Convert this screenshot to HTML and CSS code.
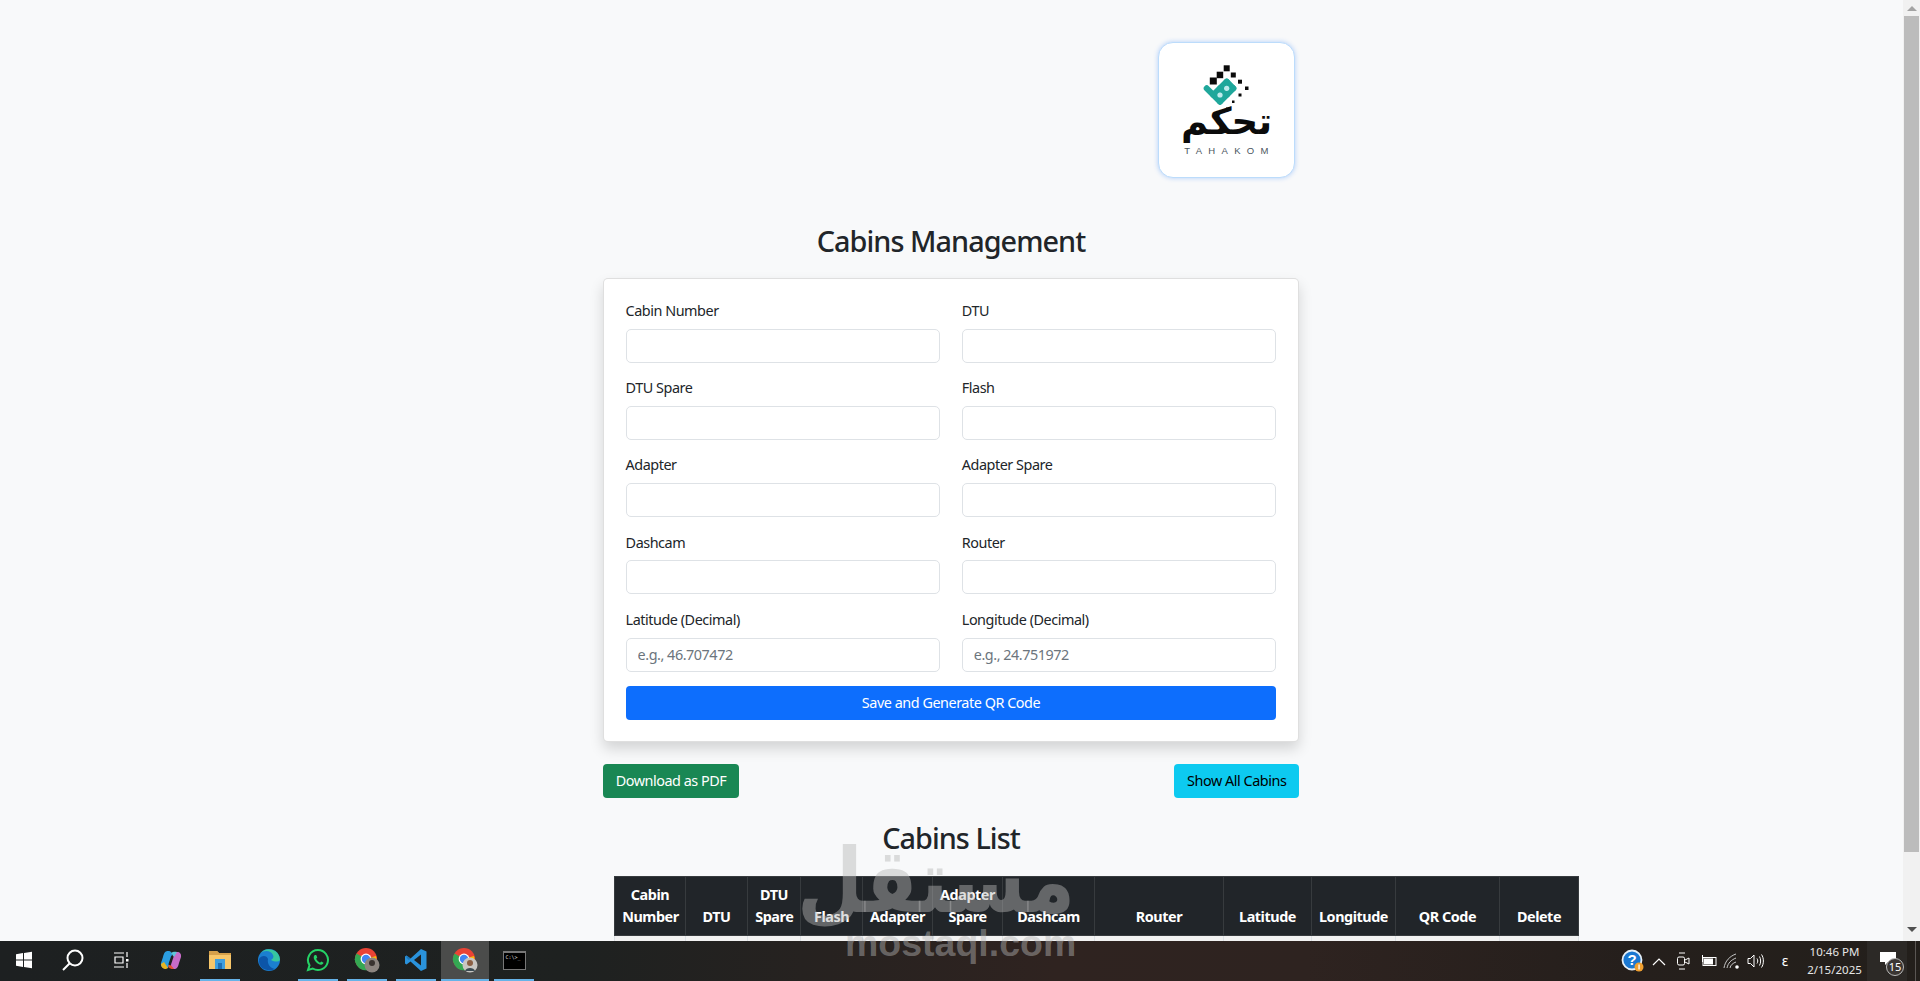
FILE: index.html

```html
<!DOCTYPE html>
<html lang="en">
<head>
  <meta charset="utf-8">
  <meta name="viewport" content="width=device-width, initial-scale=1">
  <title>Cabins Management</title>
  <link rel="stylesheet" href="styles.css">
</head>
<body>
<div class="window">
  <div class="page">
    <div class="container">
      <div class="logo-row">
        <div class="logo-card">
          <svg class="logo-mark" width="135" height="66" viewBox="0 0 135 66">
            <g fill="#0b0b0b">
              <rect x="64.700" y="22.300" width="6" height="6"/>
              <rect x="57.700" y="28.700" width="6.500" height="6.500"/>
              <rect x="71.800" y="29.500" width="5" height="5"/>
              <rect x="50.800" y="34.500" width="7" height="7"/>
              <rect x="79" y="36.700" width="4" height="4"/>
              <rect x="86" y="43.500" width="3.500" height="3.500"/>
              <rect x="79.500" y="50.500" width="3" height="3"/>
              <rect x="73" y="57.500" width="2.500" height="2.500"/>
              <rect x="67" y="64.500" width="1.500" height="1.500"/>
            </g>
            <g fill="none" stroke="#1fa79b" stroke-width="6" stroke-linecap="round" stroke-linejoin="round">
              <path d="M47.700 45.300 61 58.700"/>
              <path d="M67.700 38.700 74.300 45.300"/>
              <path d="M61 45.300 67.700 52"/>
              <path d="M61 58.700 74.300 45.300"/>
              <path d="M54.300 52 67.700 38.700"/>
            </g>
            <circle cx="61" cy="52" r="2.600" fill="#bfeaec"/>
            <circle cx="67.700" cy="45.300" r="2.600" fill="#bfeaec"/>
          </svg>
          <div class="logo-ar" dir="rtl">تحكم</div>
          <div class="logo-en">TAHAKOM</div>
        </div>
      </div>

      <h2 class="title">Cabins Management</h2>

      <form class="card">
        <div class="fields">
          <div class="field"><label>Cabin Number</label><input type="text"></div>
          <div class="field"><label>DTU</label><input type="text"></div>
          <div class="field"><label>DTU Spare</label><input type="text"></div>
          <div class="field"><label>Flash</label><input type="text"></div>
          <div class="field"><label>Adapter</label><input type="text"></div>
          <div class="field"><label>Adapter Spare</label><input type="text"></div>
          <div class="field"><label>Dashcam</label><input type="text"></div>
          <div class="field"><label>Router</label><input type="text"></div>
          <div class="field"><label>Latitude (Decimal)</label><input type="text" placeholder="e.g., 46.707472"></div>
          <div class="field"><label>Longitude (Decimal)</label><input type="text" placeholder="e.g., 24.751972"></div>
        </div>
        <button type="button" class="btn btn-blue btn-full">Save and Generate QR Code</button>
      </form>

      <div class="actions">
        <button type="button" class="btn btn-green">Download as PDF</button>
        <button type="button" class="btn btn-cyan">Show All Cabins</button>
      </div>

      <h2 class="title list-title">Cabins List</h2>

      <table class="cabins">
        <thead>
          <tr>
            <th>Cabin Number</th><th>DTU</th><th>DTU Spare</th><th>Flash</th><th>Adapter</th><th>Adapter Spare</th>
            <th>Dashcam</th><th>Router</th><th>Latitude</th><th>Longitude</th><th>QR Code</th><th>Delete</th>
          </tr>
        </thead>
        <tbody>
          <tr>
            <td>&nbsp;</td><td></td><td></td><td></td><td></td><td></td>
            <td></td><td></td><td></td><td></td><td></td><td></td>
          </tr>
        </tbody>
      </table>
    </div>
  </div>

  <div class="scrollbar">
    <div class="arrow-up"></div>
    <div class="thumb"></div>
    <div class="arrow-down"></div>
  </div>
</div>

<div class="taskbar">
  <div class="apps">
    <div class="app">
      <svg width="18" height="18" viewBox="0 0 18 18" fill="#fff"><path d="M1 3.200 8 2.100V8.500H1zM9 2 17 .8V8.500H9zM1 9.500H8V15.900L1 14.800zM9 9.500H17V17.200L9 16z"/></svg>
    </div>
    <div class="app">
      <svg width="24" height="24" viewBox="0 0 24 24" fill="none" stroke="#fff" stroke-width="2"><circle cx="14" cy="10" r="7.500"/><path d="M8.500 15.500 2 22"/></svg>
    </div>
    <div class="app">
      <svg width="18" height="18" viewBox="0 0 18 18" fill="none" stroke="#fff" stroke-width="1.200"><path d="M1 2H11M1 16H11M2 6H10V12H2zM14 1V6M14 12V17"/><rect x="13" y="8" width="2.500" height="2.500" fill="#fff" stroke="none"/></svg>
    </div>
    <div class="app">
      <svg width="24" height="24" viewBox="0 0 24 24"><path d="M9 3C6 3 5 5 4 9L2 15C1.500 18 3 20 6 20H9L13 8C13.500 5 12 3 9 3Z" fill="#2b9de0"/><path d="M5 14 9 20 7 21C4 21 2 19 2 16Z" fill="#e6b422"/><path d="M15 21C18 21 19 19 20 15L22 9C22.500 6 21 4 18 4H15L11 16C10.500 19 12 21 15 21Z" fill="#c86cc8"/><path d="M11 16 15 21C12 21.500 9.500 20 9 18Z" fill="#e5512f"/><path d="M12 5C14 3.500 16 3.500 18 4L15 9Z" fill="#5fc6d8"/><path d="M13.500 8 10.500 17" fill="none" stroke="#1e2120" stroke-width="2.500"/></svg>
    </div>
    <div class="app app-on">
      <svg width="22" height="20" viewBox="0 0 22 20"><path d="M0 1H8L10 3H22V19H0Z" fill="#f8c76a"/><path d="M0 1H8L10 3H22V5H0Z" fill="#d6a04a"/><path d="M6 9H16V19H6Z" fill="#3f9fe0"/><path d="M9 13H13V19H9Z" fill="#1f6fb5"/></svg>
    </div>
    <div class="app">
      <svg width="24" height="24" viewBox="0 0 24 24"><circle cx="12" cy="12" r="11" fill="#1b7fd0"/><path d="M23 12A11 11 0 0 0 3 6C6 2 14 2 16 7 17 9 16 11 14 12 18 14 21 14 23 12Z" fill="#37c6a0"/><path d="M2 11C4 7 10 7 11 11 10 16 13 20 18 21 12 24 1 22 2 11Z" fill="#0c55a8"/></svg>
    </div>
    <div class="app app-on">
      <svg width="24" height="24" viewBox="0 0 24 24"><path d="M12 2A10 10 0 1 1 6.700 20.500L2 22 3.500 17.300A10 10 0 0 1 12 2Z" fill="none" stroke="#25d366" stroke-width="2"/><path d="M8.800 7C7.500 8 7.300 9.800 8.500 12 9.800 14.500 12.500 16.500 14.800 16.800 16.300 17 17.300 15.800 17.500 14.800L15.200 13.500 14 14.700C12.500 14 10.800 12.300 10.200 10.800L11.300 9.600 10.200 7Z" fill="#25d366"/></svg>
    </div>
    <div class="app app-on">
      <svg width="26" height="26" viewBox="0 0 26 26"><circle cx="12" cy="12" r="11" fill="#ea4335"/><path d="M12 12 22 9A11 11 0 0 1 14 23Z" fill="#fbbc04"/><path d="M12 12 14 23A11 11 0 0 1 2.500 6.500Z" fill="#34a853"/><circle cx="12" cy="12" r="5.400" fill="#fff"/><circle cx="12" cy="12" r="4.200" fill="#4285f4"/><circle cx="18" cy="18" r="7.500" fill="#8d8580"/><circle cx="18" cy="16" r="3" fill="#3a3330"/></svg>
    </div>
    <div class="app app-on">
      <svg width="24" height="24" viewBox="0 0 24 24"><path d="M17 1 22.500 3.500V20.500L17 23 6.500 13.500 2.500 16.500 1 15.500V8.500L2.500 7.500 6.500 10.500Z" fill="#2a93dc"/><path d="M17 6.500 10 12 17 17.500Z" fill="#1e1f20"/><path d="M2.500 7.500 6.500 10.500 4.800 12 2.500 9.800Z" fill="#1c76b8"/></svg>
    </div>
    <div class="app app-on app-active">
      <svg width="26" height="26" viewBox="0 0 26 26"><circle cx="12" cy="12" r="11" fill="#ea4335"/><path d="M12 12 22 9A11 11 0 0 1 14 23Z" fill="#fbbc04"/><path d="M12 12 14 23A11 11 0 0 1 2.500 6.500Z" fill="#34a853"/><circle cx="12" cy="12" r="5.400" fill="#fff"/><circle cx="12" cy="12" r="4.200" fill="#4285f4"/><circle cx="18" cy="18" r="7.500" fill="#c8c6c2"/><circle cx="18" cy="16" r="3" fill="#8b5f44"/><path d="M13 24C14 20 22 20 23 24Z" fill="#3b4a52"/></svg>
    </div>
    <div class="app app-on">
      <div class="term">C:\&gt;_</div>
    </div>
  </div>

  <div class="tray">
    <div class="tray-item w-help">
      <svg width="24" height="24" viewBox="0 0 24 24"><circle cx="11" cy="11" r="9.500" fill="#1a78d2" stroke="#e6f0f8" stroke-width="1.800"/><text x="11" y="16" text-anchor="middle" class="help-mark">?</text><circle cx="18" cy="18" r="4.500" fill="#f0a030"/><rect x="17.400" y="15.500" width="1.300" height="5" fill="#fff"/></svg>
    </div>
    <div class="tray-item w-chev">
      <svg width="14" height="9" viewBox="0 0 14 9" fill="none" stroke="#fff" stroke-width="1.200"><path d="M1 8 7 2 13 8"/></svg>
    </div>
    <div class="tray-item w-meet">
      <svg width="14" height="18" viewBox="0 0 14 18" fill="none" stroke="#fff" stroke-width="1"><path d="M3 1H9M3 17H9"/><rect x="1.500" y="5" width="7" height="8" rx="1.500"/><path d="M9 8 13 6V12L9 10"/></svg>
    </div>
    <div class="tray-item w-batt">
      <svg width="18" height="12" viewBox="0 0 18 12"><path d="M0 2H3M0 5H3M3 0H4V7H3Z" fill="#fff"/><rect x="4" y="2.500" width="13" height="8" fill="none" stroke="#fff"/><rect x="5" y="3.500" width="9" height="6" fill="#fff"/></svg>
    </div>
    <div class="tray-item w-wifi">
      <svg width="18" height="16" viewBox="0 0 18 16" fill="none" stroke="#c8c8c8" stroke-width="1"><path d="M1 15C2 8 7 3 13 1M4 15C5 10 8 7 13 5M7 15C7.500 12 10 10 13 9"/><circle cx="14" cy="14" r="1.800" fill="#fff" stroke="none"/></svg>
    </div>
    <div class="tray-item w-sound">
      <svg width="18" height="16" viewBox="0 0 18 16" fill="none" stroke="#fff" stroke-width="1"><path d="M1 5.500H3.500L7 2V14L3.500 10.500H1Z"/><path d="M10 5.500C11 7 11 9 10 10.500M12.500 3.500C14 6 14 10 12.500 12.500M14.500 1.500C17 5 17 11 14.500 14.500"/></svg>
    </div>
    <div class="tray-item w-lang">ε</div>
    <div class="clock">
      <span>10:46 PM</span>
      <span>2/15/2025</span>
    </div>
    <div class="notify">
      <svg width="16" height="13" viewBox="0 0 16 13" fill="#fff"><path d="M0 0H16V10H8L5 13V10H0Z"/></svg>
      <span class="notify-count">15</span>
    </div>
    <div class="show-desktop"></div>
  </div>
</div>

<div class="watermark">
  <div class="wm-ar" dir="rtl">مستقل</div>
  <div class="wm-en">mostaql.com</div>
</div>
</body>
</html>
```

FILE: styles.css

```css
* {
  box-sizing: border-box;
}
html, body {
  height: 100%;
}
body {
  margin: 0;
  overflow: hidden;
  display: flex;
  flex-direction: column;
  font-family: "Noto Sans", "Open Sans", sans-serif;
  font-size: 14.4px;
  line-height: 21.6px;
  letter-spacing: -0.032em;
  color: #212529;
  background: #f8f9fa;
}

/* browser area */
.window {
  display: flex;
  height: 941px;
  overflow: hidden;
}
.page {
  flex: 1;
  min-width: 0;
  padding-right: 1px;
  overflow: hidden;
}
.container {
  width: 696px;
  margin: 0 auto;
  padding-top: 42px;
}
.logo-row {
  display: flex;
  justify-content: flex-end;
  padding-right: 4px;
}
.logo-card {
  width: 137px;
  height: 136px;
  background: #fff;
  border: 1px solid #bcdcfb;
  border-radius: 15px;
  box-shadow: 0 0 5px rgba(13, 110, 253, 0.3);
  display: flex;
  flex-direction: column;
  align-items: center;
  overflow: hidden;
}
.logo-mark {
  display: block;
  flex: none;
  overflow: visible;
}
.logo-ar {
  font-family: "DejaVu Sans", sans-serif;
  font-weight: 700;
  font-size: 37px;
  line-height: 26px;
  letter-spacing: 0;
  color: #0b0b0b;
}
.logo-en {
  font-family: "Liberation Sans", sans-serif;
  font-size: 9.500px;
  line-height: 12px;
  letter-spacing: 6.300px;
  margin: 10px -6px 0 0;
  color: #4a5560;
}

.title {
  margin: 45.500px 0 19.500px;
  font-size: 28.8px;
  line-height: 34.500px;
  font-weight: 500;
  letter-spacing: -0.033em;
  text-align: center;
}
.card {
  background: #fff;
  border: 1px solid rgba(0, 0, 0, 0.125);
  border-radius: 5px;
  padding: 21.600px 21.600px 20.600px;
  box-shadow: 0 7px 14px rgba(0, 0, 0, 0.15);
}
.fields {
  display: grid;
  grid-template-columns: 1fr 1fr;
  column-gap: 21.600px;
}
.field {
  margin-bottom: 14.400px;
}
.field label {
  display: block;
  margin-bottom: 7.200px;
}
.field input {
  display: block;
  width: 100%;
  height: 34px;
  padding: 5px 11px;
  font: inherit;
  letter-spacing: inherit;
  color: #212529;
  background: #fff;
  border: 1px solid #dee2e6;
  border-radius: 5px;
}
.field input::placeholder {
  color: #6c757d;
}
.btn {
  height: 34px;
  padding: 0 11.700px;
  font: inherit;
  letter-spacing: inherit;
  border: 1px solid transparent;
  border-radius: 4px;
}
.btn-full {
  display: block;
  width: 100%;
}
.btn-blue {
  color: #fff;
  background: #0d6efd;
}
.btn-green {
  color: #fff;
  background: #198754;
}
.btn-cyan {
  color: #000;
  background: #0dcaf0;
}
.actions {
  display: flex;
  justify-content: space-between;
  margin-top: 22px;
}
.list-title {
  margin: 23px 0 21px;
}

/* table runs wider than the form */
.cabins {
  width: 964px;
  margin-left: 11px;
  table-layout: fixed;
  border-collapse: collapse;
}
.cabins th {
  padding: 7.200px;
  font-weight: 700;
  text-align: center;
  vertical-align: bottom;
  color: #fff;
  background: #212529;
  border: 1px solid #373b3e;
}
.cabins td {
  padding: 7.200px;
  background: #f2f2f2;
  border: 1px solid #dee2e6;
}
.cabins th:nth-child(1) { width: 71px; }
.cabins th:nth-child(2) { width: 62px; }
.cabins th:nth-child(3) { width: 53px; }
.cabins th:nth-child(4) { width: 62px; }
.cabins th:nth-child(5) { width: 70px; }
.cabins th:nth-child(6) { width: 70px; }
.cabins th:nth-child(7) { width: 92px; }
.cabins th:nth-child(8) { width: 129px; }
.cabins th:nth-child(9) { width: 88px; }
.cabins th:nth-child(10) { width: 84px; }
.cabins th:nth-child(11) { width: 104px; }
.cabins th:nth-child(12) { width: 79px; }
.cabins th:nth-child(n+5) {
  padding-left: 2px;
  padding-right: 2px;
}

/* scrollbar */
.scrollbar {
  width: 17px;
  flex: none;
  display: flex;
  flex-direction: column;
  align-items: center;
  background: #f1f1f1;
}
.arrow-up {
  flex: none;
  margin: 6px 0 5px;
  border-left: 5px solid transparent;
  border-right: 5px solid transparent;
  border-bottom: 5px solid #a3a3a3;
}
.thumb {
  width: 15px;
  height: 836px;
  flex: none;
  background: #bcbcbc;
}
.arrow-down {
  flex: none;
  margin-top: 75px;
  border-left: 5px solid transparent;
  border-right: 5px solid transparent;
  border-top: 5px solid #505050;
}

/* windows taskbar */
.taskbar {
  height: 40px;
  flex: none;
  display: flex;
  justify-content: space-between;
  letter-spacing: 0;
  color: #fff;
  background: linear-gradient(to right, #1d2021 0, #1e2120 30%, #2f2320 55%, #2e2320 68%, #251f1c 85%, #231f1b 100%);
}
.apps {
  display: flex;
  gap: 9px;
  padding-left: 4px;
}
.app {
  width: 40px;
  height: 40px;
  display: flex;
  align-items: center;
  justify-content: center;
  border-bottom: 2px solid transparent;
}
.app-on {
  border-bottom-color: #66b3e8;
}
.app-active {
  width: 48px;
  margin: 0 -4px;
  background-color: #4b4c4b;
}
.term {
  width: 23px;
  height: 19px;
  padding-left: 2px;
  font-family: "DejaVu Sans Mono", monospace;
  font-size: 5px;
  line-height: 9px;
  color: #ddd;
  background: #000;
  border: 1px solid #777;
  border-top-width: 2px;
}
.tray {
  display: flex;
  align-items: stretch;
}
.tray-item {
  display: flex;
  align-items: center;
  justify-content: center;
}
.w-help { width: 27px; }
.w-chev { width: 25px; }
.w-meet { width: 24px; }
.w-batt { width: 25px; }
.w-wifi { width: 24px; }
.w-sound { width: 24px; }
.w-lang {
  width: 34px;
  font-family: "Noto Sans", sans-serif;
  font-size: 14px;
}
.help-mark {
  font-family: "Liberation Sans", sans-serif;
  font-size: 15px;
  font-weight: 700;
  fill: #fff;
}
.clock {
  width: 65px;
  display: flex;
  flex-direction: column;
  align-items: center;
  justify-content: center;
  font-size: 11.500px;
  line-height: 18px;
  color: #e6e6e6;
}
.notify {
  position: relative;
  width: 40px;
  display: flex;
  align-items: center;
  padding-left: 13px;
  padding-bottom: 5px;
  background: #2c2926;
}
.notify-count {
  position: absolute;
  left: 19px;
  top: 17px;
  width: 18px;
  height: 18px;
  font-size: 11px;
  line-height: 16px;
  text-align: center;
  background: #3a3633;
  border: 1px solid #bbb;
  border-radius: 50%;
}
.show-desktop {
  width: 9px;
  margin-right: 4px;
  border-right: 1px solid #5a5653;
}

/* overlay from the source site */
.watermark {
  position: absolute;
  left: 845px;
  top: 845px;
  width: 230px;
  text-align: center;
  letter-spacing: 0;
  color: rgba(182, 182, 182, 0.45);
  pointer-events: none;
}
.wm-ar {
  font-family: "DejaVu Sans", sans-serif;
  font-weight: 700;
  font-size: 76px;
  line-height: 80px;
  transform: scaleY(1.18);
  transform-origin: 50% 75%;
}
.wm-en {
  font-family: "Liberation Sans", sans-serif;
  font-weight: 700;
  font-size: 37.500px;
  line-height: 36px;
}
```
